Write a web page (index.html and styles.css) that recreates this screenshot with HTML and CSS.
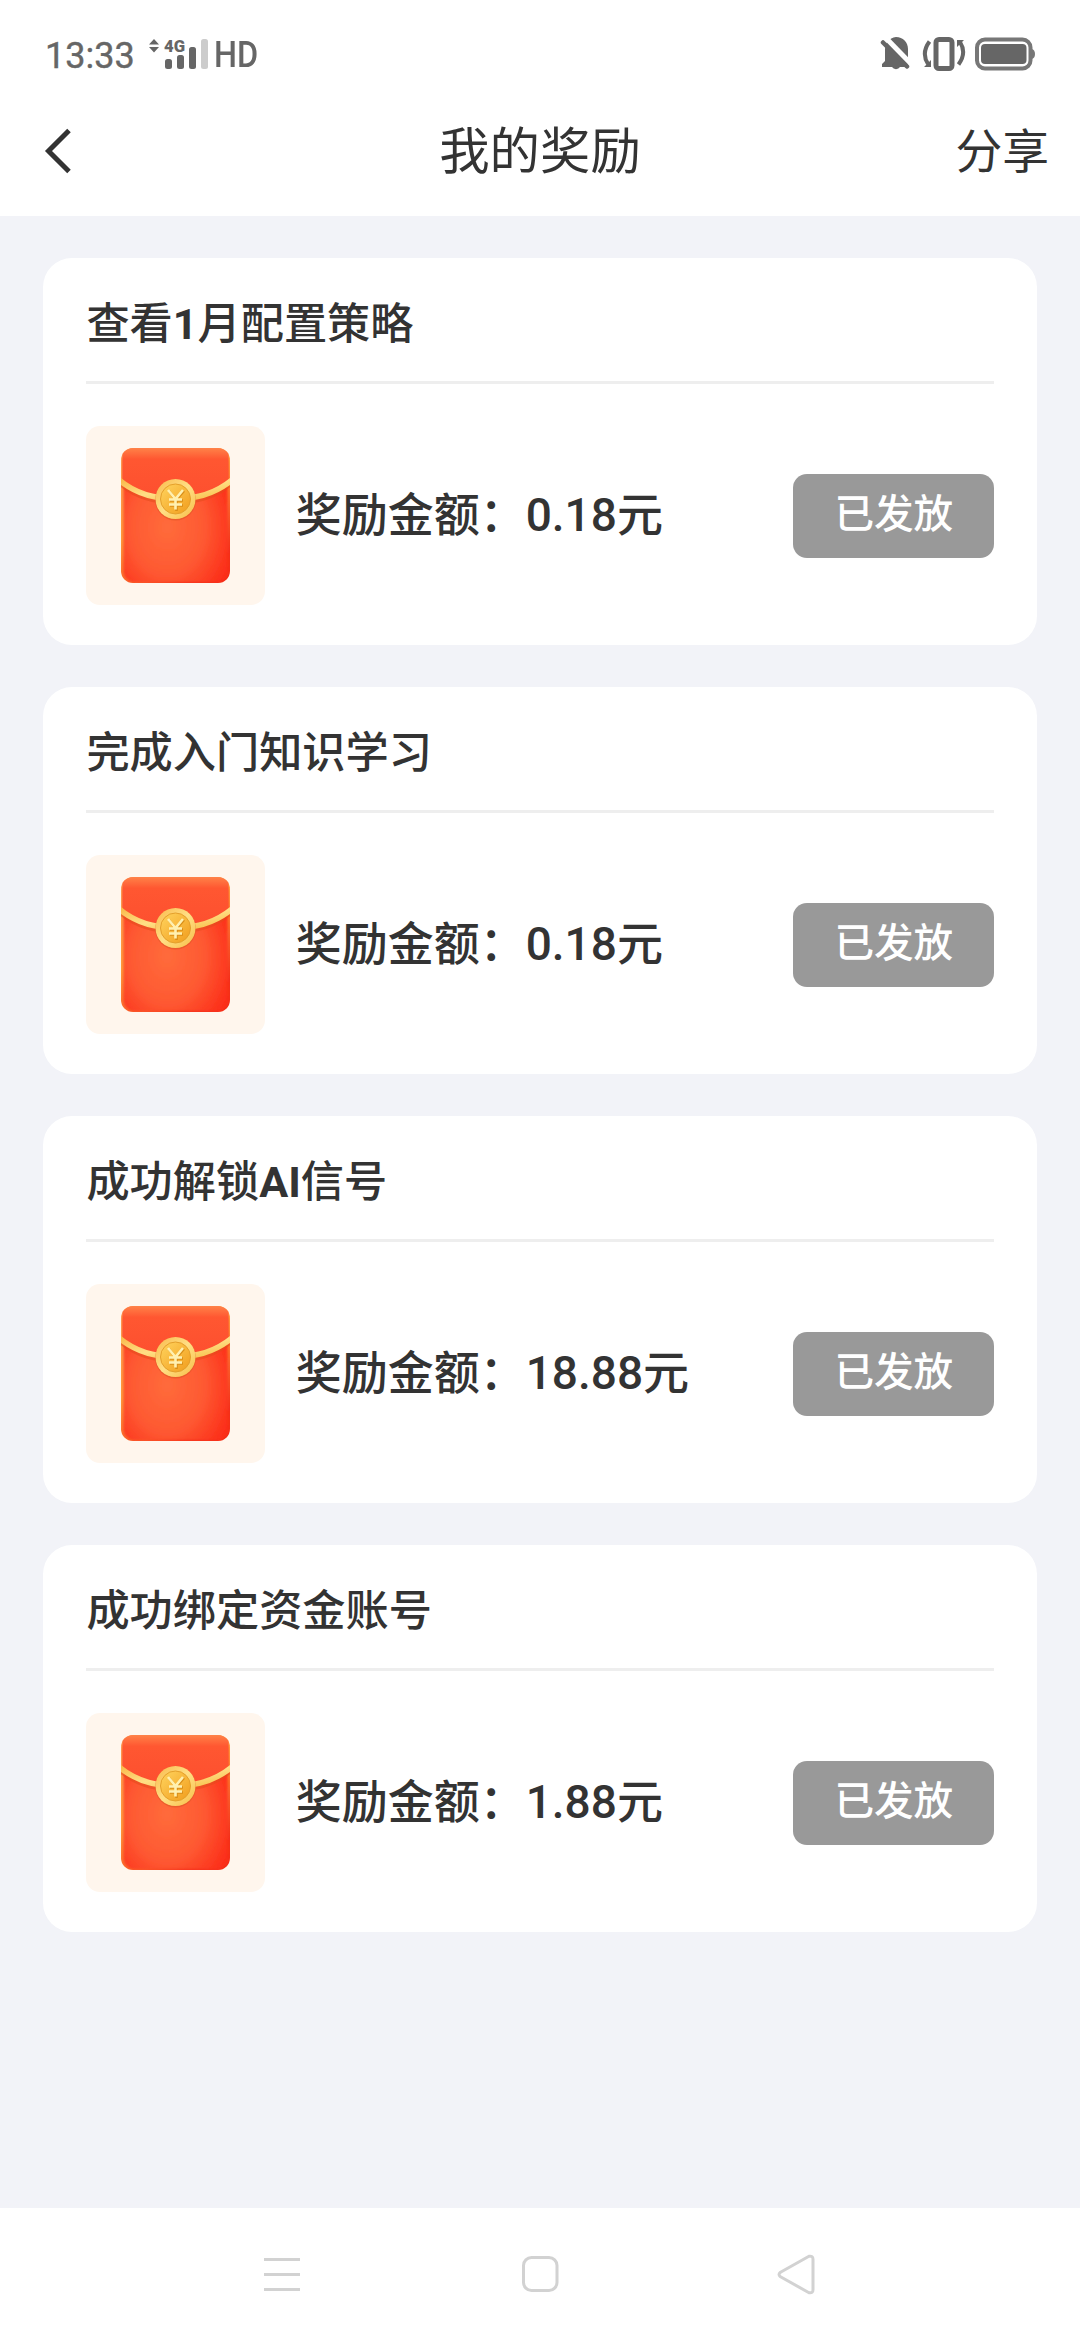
FILE: index.html
```html
<!DOCTYPE html>
<html lang="zh-CN">
<head>
<meta charset="utf-8">
<title>我的奖励</title>
<link rel="stylesheet" href="styles.css">
</head>
<body>
<svg class="defs" width="0" height="0" aria-hidden="true">
  <defs>
    <linearGradient id="edge" x1="0" y1="0" x2=".6" y2="1">
      <stop offset="0" stop-color="#ff9c58"/><stop offset=".5" stop-color="#ff9a3c"/><stop offset="1" stop-color="#f5301a"/>
    </linearGradient>
    <radialGradient id="body" cx=".42" cy=".58" r=".72">
      <stop offset="0" stop-color="#ff6b3b"/><stop offset=".5" stop-color="#fe5932"/><stop offset="1" stop-color="#fc2514"/>
    </radialGradient>
    <linearGradient id="flap" x1="0" y1="0" x2="0" y2="1">
      <stop offset="0" stop-color="#ff8248"/><stop offset=".22" stop-color="#ff5731"/><stop offset="1" stop-color="#fd4f2f"/>
    </linearGradient>
    <linearGradient id="gold" x1="0" y1="0" x2="1" y2="1">
      <stop offset="0" stop-color="#f9b94a"/><stop offset=".5" stop-color="#ffdf85"/><stop offset="1" stop-color="#f7bd45"/>
    </linearGradient>
    <linearGradient id="coin" x1="0" y1="0" x2="1" y2="1">
      <stop offset="0" stop-color="#ffd45e"/><stop offset="1" stop-color="#f19c1c"/>
    </linearGradient>
    <filter id="soft" x="-10%" y="-10%" width="120%" height="120%"><feGaussianBlur stdDeviation="1.3"/></filter>
    <clipPath id="packet-shape"><rect x="35" y="22" width="109" height="135" rx="12"/></clipPath>
    <symbol id="packet" viewBox="0 0 179 179">
      <g clip-path="url(#packet-shape)">
        <rect x="35" y="22" width="109" height="135" fill="url(#edge)"/>
        <rect x="37.500" y="25" width="104" height="131" rx="11" fill="url(#body)" filter="url(#soft)"/>
        <path d="M36.500 22H142.500V53Q124 73 89.500 73Q55 73 36.500 53Z" fill="url(#flap)"/>
        <path d="M35 58Q56 76 89.500 76Q123 76 144 58" fill="none" stroke="#e24a1c" stroke-opacity=".55" stroke-width="5"/>
        <path d="M33 54Q56 73 89.500 73Q123 73 146 54" fill="none" stroke="url(#gold)" stroke-width="5.500"/>
      </g>
      <circle cx="89.500" cy="74" r="20.500" fill="#cf4a1c" opacity=".4"/>
      <circle cx="89.500" cy="73" r="20" fill="url(#gold)"/>
      <circle cx="89.500" cy="73" r="15" fill="url(#coin)" stroke="#e49f2b" stroke-width="1"/>
      <g fill="none" stroke-width="2.600">
        <path d="M83 65l7 9 8-9M90.500 74v11M84 74.500h13M84 79.500h13" stroke="#d98e18"/>
        <path d="M82 64l7.500 9 7.500-9M89.500 73v10.500M83 73.500h13M83 78.500h13" stroke="#fff0b0"/>
      </g>
    </symbol>
  </defs>
</svg>

<div class="screen">
  <div class="status">
    <span class="clock">13:33</span>
    <span class="network">
      <svg class="updown" width="10" height="14" viewBox="0 0 10 14" fill="#666"><path d="M5 0l5 5.500H0zM0 8h10L5 13.500z"/></svg>
      <svg class="signal" width="46" height="32" viewBox="0 0 46 32" fill="#666">
        <text class="signal-type" x="0" y="12.500" textLength="21" lengthAdjust="spacingAndGlyphs">4G</text>
        <rect x="1" y="20" width="7" height="10" rx="2.500"/><rect x="13" y="16" width="7" height="14" rx="2.500"/>
        <rect x="25" y="8" width="7" height="22" rx="2.500"/><rect x="37" y="0" width="7" height="30" rx="2.500" fill="#ccc"/>
      </svg>
    </span>
    <span class="hd">HD</span>
    <span class="status-icons">
      <svg class="bell" width="30" height="36" viewBox="0 0 30 36">
        <path d="M2 31v-3l3-3V14C5 7 9 2 16 1c7 0 12 5 12 12v16l1 2H20a4.500 4 0 0 1-8 0z" fill="#666"/>
        <path d="M4 0L33 30" stroke="#fff" stroke-width="5"/>
        <path d="M3 6.500L27 30.500" stroke="#666" stroke-width="4.500" stroke-linecap="round"/>
      </svg>
      <svg class="vibrate" width="44" height="36" viewBox="0 0 44 36" fill="none" stroke="#666">
        <rect x="14" y="3.500" width="16" height="29" rx="3" stroke-width="5"/>
        <path d="M7.500 5.500Q-1 17 6 28M36.500 28.500Q45 17 38 6" stroke-width="4"/>
        <path d="M2 31l7-7v7zM35 4h7l-7 7z" fill="#666" stroke="none"/>
      </svg>
      <svg width="61" height="36" viewBox="0 0 61 36">
        <rect x="2" y="3.500" width="53.500" height="29" rx="8" fill="none" stroke="#777" stroke-width="4"/>
        <rect x="6" y="8" width="45.500" height="20" rx="4" fill="#666"/>
        <path d="M57 13q3 1 3 5t-3 5z" fill="#777"/>
      </svg>
    </span>
  </div>

  <div class="header">
    <svg class="back" width="28" height="48" viewBox="0 0 28 48"><path d="M25 3.500L4.500 24 25 44.500" fill="none" stroke="#333" stroke-width="5"/></svg>
    <h1 class="page-title">我的奖励</h1>
    <span class="share">分享</span>
  </div>

  <div class="list">
    <div class="card">
      <h2 class="card-title">查看<b>1</b>月配置策略</h2>
      <div class="reward">
        <svg class="thumb"><use href="#packet"/></svg>
        <span class="amount">奖励金额：0.18元</span>
        <span class="state">已发放</span>
      </div>
    </div>
    <div class="card">
      <h2 class="card-title">完成入门知识学习</h2>
      <div class="reward">
        <svg class="thumb"><use href="#packet"/></svg>
        <span class="amount">奖励金额：0.18元</span>
        <span class="state">已发放</span>
      </div>
    </div>
    <div class="card">
      <h2 class="card-title">成功解锁<b>AI</b>信号</h2>
      <div class="reward">
        <svg class="thumb"><use href="#packet"/></svg>
        <span class="amount">奖励金额：18.88元</span>
        <span class="state">已发放</span>
      </div>
    </div>
    <div class="card">
      <h2 class="card-title">成功绑定资金账号</h2>
      <div class="reward">
        <svg class="thumb"><use href="#packet"/></svg>
        <span class="amount">奖励金额：1.88元</span>
        <span class="state">已发放</span>
      </div>
    </div>
  </div>

  <div class="navbar">
    <svg width="44" height="44" viewBox="0 0 44 44" fill="none" stroke="#d2d2d2" stroke-width="3"><path d="M4 5.500h36M4 20.500h36M4 35.500h36"/></svg>
    <svg width="44" height="44" viewBox="0 0 44 44" fill="none" stroke="#d2d2d2" stroke-width="3"><rect x="5.500" y="3.500" width="33.500" height="33" rx="8"/></svg>
    <svg width="44" height="44" viewBox="0 0 44 44" fill="none" stroke="#d2d2d2" stroke-width="3" stroke-linejoin="round"><path d="M33 2.300L4.500 18.200q-3 2.300 0 4.600L33 38.700q4 .8 4-3V5.300q0-3.800-4-3z"/></svg>
  </div>
</div>
</body>
</html>
```
FILE: styles.css
```css
* { box-sizing: border-box; }
body {
  margin: 0;
  color: #333;
  font-family: Roboto, "Noto Sans CJK SC", sans-serif;
}
svg { display: block; flex: none; }
.defs { position: absolute; }
.screen {
  display: flex;
  flex-direction: column;
  width: 1080px;
  height: 2340px;
  background: #f2f3f8;
}
.status {
  display: flex;
  align-items: center;
  height: 108px;
  padding: 0 44px 0 45px;
  background: #fff;
  color: #666;
  font-size: 36px;
  line-height: 42px;
}
.clock { width: 104px; padding-top: 4px; -webkit-text-stroke: .4px #666; }
.network { display: flex; align-items: flex-start; gap: 5px; padding-top: 2px; }
.signal { overflow: visible; }
.signal-type { font-size: 17px; font-weight: 900; }
.hd {
  margin-left: 4px;
  padding-top: 2px;
  transform: scaleX(.9);
  transform-origin: left;
  font-weight: 500;
}
.status-icons { display: flex; margin-left: auto; }
.bell { margin-right: 12px; }
.vibrate { margin-right: 9px; }
.header {
  display: grid;
  grid-template-columns: 1fr auto 1fr;
  align-items: center;
  height: 108px;
  padding: 0 31px 24px;
  background: #fff;
}
.back { margin-left: 13px; }
.page-title {
  margin: 0;
  padding-top: 2px;
  font-size: 50.400px;
  font-weight: 400;
  line-height: 84px;
}
.share { justify-self: end; padding-top: 1px; font-size: 46.800px; line-height: 76px; }
.list {
  display: flex;
  flex: 1;
  flex-direction: column;
  gap: 42px;
  padding: 42px 43.200px;
}
.card {
  height: 387px;
  padding: 0 42.500px;
  border-radius: 29px;
  background: #fff;
}
.card-title {
  height: 126px;
  margin: 0;
  border-bottom: 3px solid #eee;
  font-size: 43.200px;
  font-weight: 500;
  line-height: 133px;
  text-indent: .7px;
}
.card-title b { font-weight: 700; }
.reward { display: flex; align-items: center; height: 179px; margin-top: 42px; }
.thumb {
  width: 179px;
  height: 179px;
  border-radius: 14px;
  background: #fff6ed;
}
.amount { margin-left: 31px; padding-bottom: 1px; font-size: 46px; font-weight: 500; line-height: 70px; }
.state {
  width: 201px;
  height: 84px;
  margin-left: auto;
  border-radius: 14px;
  background: #999;
  color: #fff;
  font-size: 39.600px;
  font-weight: 500;
  line-height: 81px;
  text-align: center;
}
.navbar {
  display: flex;
  justify-content: space-between;
  height: 132px;
  padding: 46px 260px 0;
  background: #fff;
}
```
